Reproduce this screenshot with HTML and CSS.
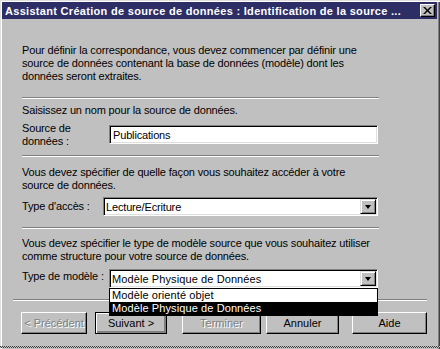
FILE: index.html
```html
<!DOCTYPE html>
<html lang="fr">
<head>
  <meta charset="UTF-8">
  <title>Assistant Création de source de données</title>
  <link rel="stylesheet" href="styles.css">
</head>
<body>
  <div class="window">
    <div class="titlebar">
      <span class="title">Assistant Création de source de données : Identification de la source ...</span>
      <span class="close-btn">
        <svg width="9" height="7" viewBox="0 0 9 7"><path d="M0 0h2l2.5 2.5L7 0h2L5.5 3.5 9 7H7L4.5 4.5 2 7H0l3.5-3.5z" fill="#000"/></svg>
      </span>
    </div>

    <div class="content">
      <div class="pane">
        <p class="text intro">Pour définir la correspondance, vous devez commencer par définir une<br>source de données contenant la base de données (modèle) dont les<br>données seront extraites.</p>

        <hr class="sep sep-1">

        <p class="text name-hint">Saisissez un nom pour la source de données.</p>
        <div class="field field-name">
          <label class="field-label">Source de<br>données :</label>
          <div class="edit">Publications</div>
        </div>

        <hr class="sep sep-2">

        <p class="text access-hint">Vous devez spécifier de quelle façon vous souhaitez accéder à votre<br>source de données.</p>
        <div class="field field-access">
          <label class="field-label">Type d'accès :</label>
          <div class="combo">
            <span class="combo-value">Lecture/Ecriture</span>
            <span class="combo-btn"><i class="arrow"></i></span>
          </div>
        </div>

        <hr class="sep sep-3">

        <p class="text model-hint">Vous devez spécifier le type de modèle source que vous souhaitez utiliser<br>comme structure pour votre source de données.</p>
        <div class="field field-model">
          <label class="field-label">Type de modèle :</label>
          <div class="combo combo-large">
            <span class="combo-value">Modèle Physique de Données</span>
            <span class="combo-btn"><i class="arrow"></i></span>
            <ul class="combo-list">
              <li>Modèle orienté objet</li>
              <li class="selected">Modèle Physique de Données</li>
            </ul>
          </div>
        </div>
      </div>

      <hr class="sep sep-wide">

      <div class="buttons">
        <button class="btn btn-prev" disabled>&lt; Précédent</button>
        <button class="btn btn-next default">Suivant &gt;</button>
        <button class="btn btn-finish" disabled>Terminer</button>
        <button class="btn btn-cancel">Annuler</button>
        <button class="btn btn-help">Aide</button>
      </div>
    </div>

    <div class="bottom-edge"></div>
  </div>
</body>
</html>
```

FILE: styles.css
```css
body {
  margin: 0;
  background: #c0c0c0;
  font-family: "Liberation Sans", Arial, sans-serif;
  font-size: 11px;
  color: #000;
}

.window {
  position: relative;
  width: 440px;
  height: 349px;
  box-sizing: border-box;
  padding: 2px 3px 0 2px;
  background: #c0c0c0;
  box-shadow: inset 1px 1px #dfdfdf, inset 2px 2px #fff, inset -1px 0 #404040, inset -2px 0 #808080;
  overflow: hidden;
}

/* bord inférieur tramé de la fenêtre */
.bottom-edge {
  position: absolute;
  left: 0;
  right: 0;
  top: 346px;
  height: 2px;
  background:
    repeating-linear-gradient(90deg, #404040 0 1px, #c0c0c0 1px 2px) top / 100% 1px no-repeat,
    repeating-linear-gradient(90deg, #c0c0c0 0 1px, #404040 1px 2px) bottom / 100% 1px no-repeat;
}

.titlebar {
  height: 17px;
  background: #2e2e66;
  color: #fff;
  display: flex;
  align-items: center;
  justify-content: space-between;
  padding-left: 3px;
  padding-right: 2px;
}

.title {
  font-weight: bold;
  font-size: 11px;
  white-space: nowrap;
  letter-spacing: 0.3px;
}

.close-btn {
  width: 15px;
  height: 13px;
  box-sizing: border-box;
  background: #c0c0c0;
  border: 1px solid;
  border-color: #fff #000 #000 #fff;
  box-shadow: inset -1px -1px #808080;
  display: flex;
  align-items: center;
  justify-content: center;
}

.content {
  padding-left: 20px;
}

.pane {
  width: 357px;
  letter-spacing: -0.16px;
}

.text {
  margin: 0;
  line-height: 13px;
  white-space: nowrap;
}

.intro {
  margin-top: 25px;
}

.sep {
  height: 0;
  margin: 0;
  border: 0;
  border-top: 1px solid #808080;
  border-bottom: 1px solid #fff;
}

.sep-1 {
  margin-top: 14px;
}

.name-hint {
  margin-top: 5px;
}

.field {
  display: flex;
  align-items: flex-start;
}

.field-label {
  line-height: 13px;
  flex: none;
}

.field-name {
  margin-top: 5px;
}

.field-name .field-label {
  width: 87px;
}

.edit,
.combo {
  width: 269px;
  height: 19px;
  box-sizing: border-box;
  background: #fff;
  border: 1px solid;
  border-color: #808080 #fff #fff #808080;
  box-shadow: inset 1px 1px #000, inset -1px -1px #dfdfdf;
  padding: 2px 0 0 3px;
  line-height: 15px;
  white-space: nowrap;
}

.field-name .edit {
  margin-top: 3px;
}

.sep-2 {
  margin-top: 7px;
}

.access-hint {
  margin-top: 9px;
}

.field-access {
  margin-top: 5px;
  align-items: center;
}

.field-access .field-label {
  width: 81px;
}

.field-access .combo {
  width: 275px;
}

.combo {
  position: relative;
  padding-left: 2px;
}

.combo-btn {
  position: absolute;
  top: 1px;
  right: 1px;
  width: 16px;
  height: 15px;
  box-sizing: border-box;
  background: #c0c0c0;
  border: 1px solid;
  border-color: #dfdfdf #000 #000 #dfdfdf;
  box-shadow: inset 1px 1px #fff, inset -1px -1px #808080;
  display: flex;
  align-items: center;
  justify-content: center;
}

.arrow {
  width: 0;
  height: 0;
  border-left: 3.5px solid transparent;
  border-right: 3.5px solid transparent;
  border-top: 4px solid #000;
}

.sep-3 {
  margin-top: 11px;
}

.model-hint {
  margin-top: 8px;
}

.field-model {
  margin-top: 6px;
}

.field-model .field-label {
  width: 87px;
  padding-top: 1px;
}

.combo-large {
  letter-spacing: 0.1px;
}

.combo-list {
  position: absolute;
  left: -1px;
  top: 18px;
  width: 269px;
  box-sizing: border-box;
  margin: 0;
  padding: 0;
  list-style: none;
  background: #fff;
  border: 1px solid #000;
  z-index: 2;
}

.combo-list li {
  height: 13px;
  line-height: 13px;
  padding-left: 2px;
}

.combo-list li.selected {
  background: #000;
  color: #fff;
}

.sep-wide {
  width: 414px;
  margin-top: 11px;
  margin-left: -9px;
}

.buttons {
  display: flex;
  margin-top: 11px;
  margin-left: -1px;
}

.btn {
  height: 22px;
  box-sizing: border-box;
  padding: 0;
  background: #c0c0c0;
  font-family: inherit;
  font-size: 11px;
  white-space: nowrap;
  color: #000;
  border: 1px solid;
  border-color: #fff #000 #000 #fff;
  box-shadow: inset -1px -1px #808080;
}

.btn:disabled {
  color: #808080;
  text-shadow: 1px 1px #fff;
}

.btn.default {
  border: 1px solid #000;
  box-shadow: inset 1px 1px #fff, inset -2px -2px #808080, inset -1px -1px #000;
}

.btn-prev {
  width: 66px;
}

.btn-next {
  width: 72px;
  margin-left: 8px;
}

.btn-finish {
  width: 79px;
  margin-left: 15px;
}

.btn-cancel {
  width: 73px;
  margin-left: 5px;
}

.btn-help {
  width: 75px;
  margin-left: 13px;
}
```
